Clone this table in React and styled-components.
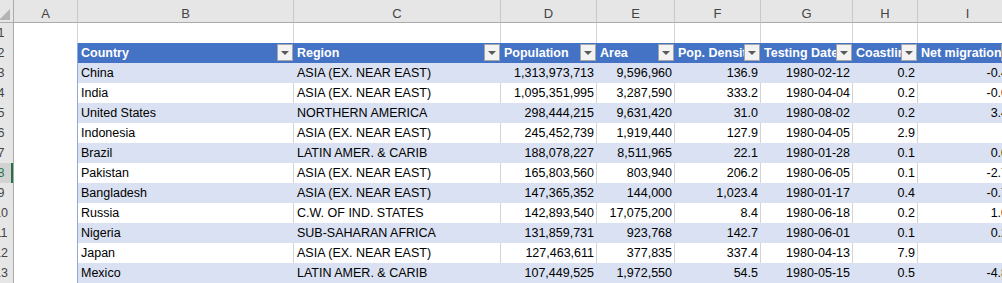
import React from "react";
import styled, { createGlobalStyle, css } from "styled-components";

const GlobalStyle = createGlobalStyle`
  html, body {
    margin: 0;
    padding: 0;
    background: #ffffff;
    overflow: hidden;
  }
  body {
    font-family: "Liberation Sans", Arial, sans-serif;
  }
`;

const COLS = "25px 64px 216px 207px 96px 78px 86px 92px 65px 100px";

const Sheet = styled.div`
  margin-left: -11px;
  width: max-content;
  display: flex;
  flex-direction: column;
`;

const Row = styled.div`
  display: grid;
  grid-template-columns: ${COLS};
  height: ${(p) => (p.$head ? 23 : 20)}px;
`;

const Corner = styled.div`
  box-sizing: border-box;
  background: #e6e6e6;
  border-right: 1px solid #ababab;
  border-bottom: 1px solid #ababab;
  display: flex;
  align-items: flex-end;
  justify-content: flex-end;
  padding: 0 3px 2px 0;
  &::after {
    content: "";
    width: 0;
    height: 0;
    border-left: 11px solid transparent;
    border-bottom: 11px solid #b4b4b4;
  }
`;

const ColHead = styled.div`
  box-sizing: border-box;
  background: #e6e6e6;
  border-right: 1px solid #c8c8c8;
  border-bottom: 1px solid #ababab;
  color: #444444;
  font-size: 13px;
  text-align: center;
  padding-top: 5px;
  line-height: 17px;
`;

const RowHead = styled.div`
  box-sizing: border-box;
  background: ${(p) => (p.$active ? "#d2d2d2" : "#e6e6e6")};
  color: ${(p) => (p.$active ? "#217346" : "#444444")};
  border-right: 1px solid #ababab;
  border-bottom: 1px solid #c8c8c8;
  font-size: 12.5px;
  text-align: center;
  padding-top: 1px;
  line-height: 19px;
  ${(p) =>
    p.$active &&
    css`
      box-shadow: inset -2px 0 0 #217346;
    `}
`;

const kinds = {
  blank: css`
    background: #ffffff;
    border-right: 1px solid #d4d4d4;
    border-bottom: 1px solid #d4d4d4;
  `,
  edge: css`
    background: #ffffff;
    border-right: 1px solid #8ea9db;
    border-bottom: 1px solid #d4d4d4;
  `,
  head: css`
    background: #4472c4;
    color: #ffffff;
    font-weight: bold;
    border-right: 1px solid #4472c4;
    border-bottom: 1px solid #8ea9db;
  `,
  band: css`
    background: #d9e1f2;
    color: #000000;
    border-right: 1px solid #d9e1f2;
    border-bottom: 1px solid #8ea9db;
  `,
  plain: css`
    background: #ffffff;
    color: #000000;
    border-right: 1px solid #d4d4d4;
    border-bottom: 1px solid #8ea9db;
  `,
};

const Cell = styled.div`
  position: relative;
  box-sizing: border-box;
  font-size: 12.5px;
  line-height: 19px;
  padding: 1px ${(p) => (p.$right ? 2 : 3)}px 0 ${(p) => (p.$right ? 2 : 3)}px;
  text-align: ${(p) => (p.$right ? "right" : "left")};
  white-space: nowrap;
  overflow: hidden;
  ${(p) => kinds[p.$kind]}
`;

const FilterButton = styled.span`
  position: absolute;
  top: 1px;
  right: 0;
  width: 16px;
  height: 17px;
  box-sizing: border-box;
  background: #f3f3f3;
  border: 1px solid #a6a6a6;
  display: flex;
  align-items: center;
  justify-content: center;
  &::after {
    content: "";
    width: 0;
    height: 0;
    border-left: 4px solid transparent;
    border-right: 4px solid transparent;
    border-top: 4px solid #595959;
    margin-top: 1px;
  }
`;

const letters = ["A", "B", "C", "D", "E", "F", "G", "H", "I"];

const headers = [
  "Country",
  "Region",
  "Population",
  "Area",
  "Pop. Density",
  "Testing Date",
  "Coastline",
  "Net migration",
];

const rightCols = [false, false, true, true, true, true, true, true];

const data = [
  ["China", "ASIA (EX. NEAR EAST)", "1,313,973,713", "9,596,960", "136.9", "1980-02-12", "0.2", "-0.40"],
  ["India", "ASIA (EX. NEAR EAST)", "1,095,351,995", "3,287,590", "333.2", "1980-04-04", "0.2", "-0.07"],
  ["United States", "NORTHERN AMERICA", "298,444,215", "9,631,420", "31.0", "1980-08-02", "0.2", "3.41"],
  ["Indonesia", "ASIA (EX. NEAR EAST)", "245,452,739", "1,919,440", "127.9", "1980-04-05", "2.9", ""],
  ["Brazil", "LATIN AMER. & CARIB", "188,078,227", "8,511,965", "22.1", "1980-01-28", "0.1", "0.03"],
  ["Pakistan", "ASIA (EX. NEAR EAST)", "165,803,560", "803,940", "206.2", "1980-06-05", "0.1", "-2.77"],
  ["Bangladesh", "ASIA (EX. NEAR EAST)", "147,365,352", "144,000", "1,023.4", "1980-01-17", "0.4", "-0.71"],
  ["Russia", "C.W. OF IND. STATES", "142,893,540", "17,075,200", "8.4", "1980-06-18", "0.2", "1.02"],
  ["Nigeria", "SUB-SAHARAN AFRICA", "131,859,731", "923,768", "142.7", "1980-06-01", "0.1", "0.26"],
  ["Japan", "ASIA (EX. NEAR EAST)", "127,463,611", "377,835", "337.4", "1980-04-13", "7.9", ""],
  ["Mexico", "LATIN AMER. & CARIB", "107,449,525", "1,972,550", "54.5", "1980-05-15", "0.5", "-4.87"],
];

export default function App() {
  return (
    <>
      <GlobalStyle />
      <Sheet>
        <Row $head>
          <Corner />
          {letters.map((l) => (
            <ColHead key={l}>{l}</ColHead>
          ))}
        </Row>

        <Row>
          <RowHead>1</RowHead>
          {letters.map((l) => (
            <Cell key={l} $kind="blank" />
          ))}
        </Row>

        <Row>
          <RowHead>2</RowHead>
          <Cell $kind="edge" />
          {headers.map((h) => (
            <Cell key={h} $kind="head">
              {h}
              <FilterButton />
            </Cell>
          ))}
        </Row>

        {data.map((row, r) => {
          const n = r + 3;
          const kind = r % 2 === 0 ? "band" : "plain";
          return (
            <Row key={n}>
              <RowHead $active={n === 8}>{n}</RowHead>
              <Cell $kind="edge" />
              {row.map((v, i) => (
                <Cell key={i} $kind={kind} $right={rightCols[i]}>
                  {v}
                </Cell>
              ))}
            </Row>
          );
        })}
      </Sheet>
    </>
  );
}
